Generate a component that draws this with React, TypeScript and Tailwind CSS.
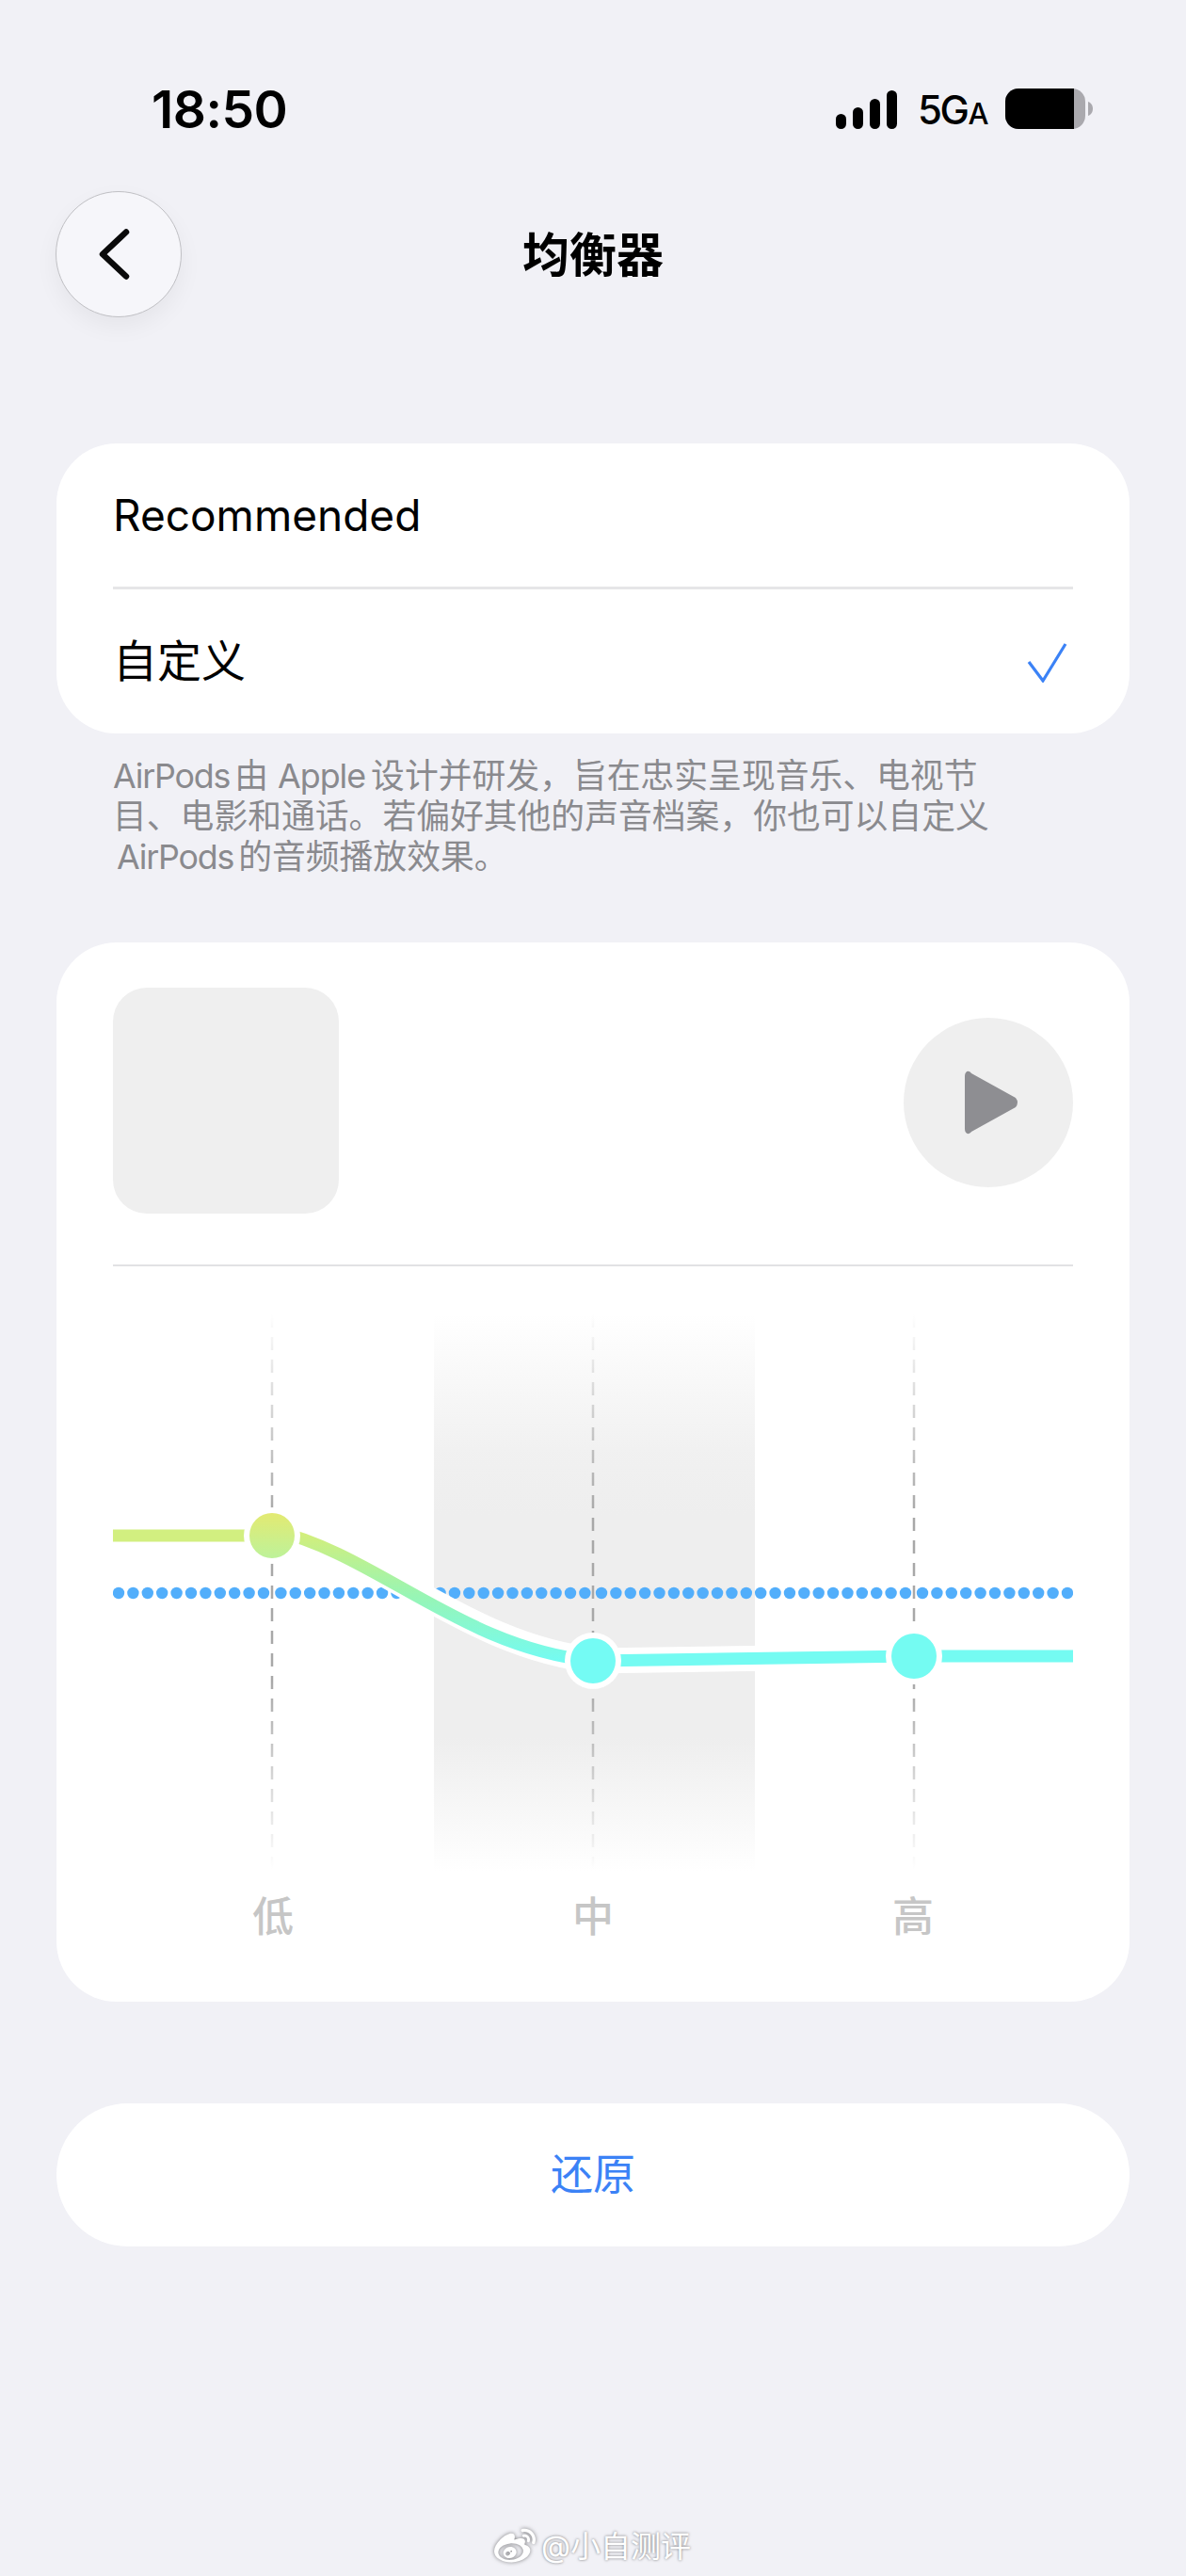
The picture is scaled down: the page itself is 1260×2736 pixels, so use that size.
import React from "react";
import { FaWeibo } from "react-icons/fa";

const SEGMENTS: [number, number, number][] = [
  [126, 15.4, 11],
  [298.4, 15.38, 22],
  [639, 15.38, 22],
  [980, 15.4, 11],
];

function Chart() {
  const xs = [289, 630, 971];
  const curve = "M289 1625 C400 1650 490 1750 630 1764";
  return (
    <svg viewBox="120 1345 1020 650" width="1020" height="650" className="block">
      <defs>
        <linearGradient id="band" x1="0" y1="0" x2="0" y2="1">
          <stop offset="0" stopColor="#eeeeee" stopOpacity="0" />
          <stop offset="0.25" stopColor="#eeeeee" stopOpacity="0.85" />
          <stop offset="0.36" stopColor="#eeeeee" />
          <stop offset="0.76" stopColor="#eeeeee" />
          <stop offset="1" stopColor="#eeeeee" stopOpacity="0" />
        </linearGradient>
        <linearGradient id="dash" gradientUnits="userSpaceOnUse" x1="0" y1="1396" x2="0" y2="1985">
          <stop offset="0" stopColor="#a8a8a8" stopOpacity="0" />
          <stop offset="0.36" stopColor="#a8a8a8" />
          <stop offset="0.66" stopColor="#a8a8a8" />
          <stop offset="1" stopColor="#a8a8a8" stopOpacity="0" />
        </linearGradient>
        <linearGradient id="curve" gradientUnits="userSpaceOnUse" x1="0" y1="1625" x2="0" y2="1764">
          <stop offset="0" stopColor="#d6ee78" />
          <stop offset="0.5" stopColor="#98f5b4" />
          <stop offset="1" stopColor="#74fbf2" />
        </linearGradient>
        <linearGradient id="node1" x1="0" y1="0" x2="0" y2="1">
          <stop offset="0" stopColor="#e3ea72" />
          <stop offset="1" stopColor="#bdf29a" />
        </linearGradient>
      </defs>
      <rect x="461" y="1396" width="341" height="592" fill="url(#band)" />
      {xs.map((x) => (
        <line key={x} x1={x} x2={x} y1="1396" y2="1985" stroke="url(#dash)" strokeWidth="2.5" strokeDasharray="14 10" />
      ))}
      {SEGMENTS.map(([start, step, n]) =>
        Array.from({ length: n }, (_, i) => (
          <circle key={`${start}-${i}`} cx={start + step * i} cy="1692" r="6.2" fill="#52aefb" />
        )),
      )}
      <path d={curve} fill="none" stroke="#ffffff" strokeWidth="27" transform="translate(7 0)" />
      <path d="M630 1764 L971 1759" fill="none" stroke="#ffffff" strokeWidth="27" />
      <path d={curve} fill="none" stroke="url(#curve)" strokeWidth="13" />
      <path d="M120 1631 L262 1631" fill="none" stroke="#d2ef80" strokeWidth="13" />
      <path d="M630 1764 L971 1759 L1140 1759" fill="none" stroke="#74fbf2" strokeWidth="13" />
      <circle cx="289" cy="1631" r="30" fill="#ffffff" />
      <circle cx="630" cy="1764" r="30" fill="#ffffff" />
      <circle cx="971" cy="1759" r="30" fill="#ffffff" />
      <circle cx="289" cy="1631" r="24" fill="url(#node1)" />
      <circle cx="630" cy="1764" r="24" fill="#74fbf4" />
      <circle cx="971" cy="1759" r="24" fill="#74fbf2" />
    </svg>
  );
}

export default function App() {
  return (
    <div className="relative w-[1260px] h-[2736px] overflow-hidden bg-[#f1f1f6] text-black font-['Inter','Noto_Sans_CJK_SC',sans-serif]">
      {/* status bar */}
      <div className="flex items-center justify-between h-[44px] mt-0 pt-[94px] box-content pl-[161px] pr-[98px]">
        <span className="text-[55px] leading-[44px] font-semibold tracking-[-0.5px]">18:50</span>
        <div className="flex items-center">
          <svg width="66" height="42" viewBox="0 0 66 42" className="block">
            <rect x="0" y="26" width="11" height="16" rx="5.5" fill="#000" />
            <rect x="18" y="19" width="11" height="23" rx="5.5" fill="#000" />
            <rect x="36" y="10" width="11" height="32" rx="5.5" fill="#000" />
            <rect x="54" y="1" width="11" height="41" rx="5.5" fill="#000" />
          </svg>
          <span className="ml-[21px] w-[73px] mt-[5px] text-[42px] leading-[44px] font-medium tracking-[-2.5px] whitespace-nowrap">
            5G<span className="ml-[1px] text-[31px]">A</span>
          </span>
          <svg width="94" height="44" viewBox="0 0 94 44" className="ml-[20px] block">
            <rect x="0" y="0" width="85" height="43" rx="14" fill="#aaa9ae" />
            <path d="M14 0H73V43H14A14 14 0 0 1 0 29V14A14 14 0 0 1 14 0Z" fill="#000" />
            <path d="M88 14C91 15 93 18 93 21.5C93 25 91 28 88 29Z" fill="#aaa9ae" />
          </svg>
        </div>
      </div>

      {/* nav */}
      <div className="grid grid-cols-[1fr_auto_1fr] items-center mt-[65px] px-[59px]">
        <button className="flex items-center justify-center w-[134px] h-[134px] rounded-full bg-[#f6f6fa] border border-[#c0c0c4] shadow-[0_10px_24px_rgba(0,0,0,0.05)]">
          <svg width="36" height="56" viewBox="0 0 36 56" fill="none" className="-ml-[9px]">
            <path d="M30 4.5 L5 28 L30 51.5" stroke="#0a0a0a" strokeWidth="6.5" strokeLinecap="round" strokeLinejoin="round" />
          </svg>
        </button>
        <h1 className="mt-[2px] text-[50px] leading-[60px] font-semibold">均衡器</h1>
        <div />
      </div>

      {/* preset card */}
      <div className="mt-[134px] mx-[60px] rounded-[64px] bg-white px-[60px]">
        <div className="flex items-center h-[155px] text-[46px] border-b-[3px] border-[#e6e6e8]">Recommended</div>
        <div className="flex items-center justify-between h-[153px] text-[47px]">
          <span>自定义</span>
          <svg width="44" height="44" viewBox="0 0 44 44" fill="none" className="mr-[5px]">
            <path d="M2 22 L17 42 L41 3" stroke="#3b82f6" strokeWidth="3.2" />
          </svg>
        </div>
      </div>

      <p className="mt-[24px] mx-[120px] text-[35.8px] leading-[43px] text-[#8a8a8e] whitespace-nowrap">
        <span className="block">
          <span className="tracking-[-1.2px]">AirPods</span>
          <span className="ml-[5px]">由</span> <span className="tracking-[-1px]">Apple</span>
          <span className="ml-[6px]">设计并研发，旨在忠实呈现音乐、电视节</span>
        </span>
        <span className="block">目、电影和通话。若偏好其他的声音档案，你也可以自定义</span>
        <span className="block ml-[4px]">
          <span className="tracking-[-1.2px]">AirPods</span>
          <span className="ml-[5px]">的音频播放效果。</span>
        </span>
      </p>

      {/* equalizer card */}
      <div className="mt-[69px] mx-[60px] h-[1125px] rounded-[64px] bg-white px-[60px] pt-[48px]">
        <div className="flex items-start justify-between h-[296px] border-b-2 border-[#e2e2e4]">
          <div className="w-[240px] h-[240px] rounded-[36px] bg-[#efefef]" />
          <div className="mt-[32px] flex items-center justify-center w-[180px] h-[180px] rounded-full bg-[#efefef]">
            <svg width="62" height="70" viewBox="0 0 62 70" className="ml-[6px]">
              <path d="M3 7 C3 2 7 0 10 4 L57 30 Q61 35 57 40 L10 66 C7 70 3 68 3 63 Z" fill="#8e8e92" />
            </svg>
          </div>
        </div>
        <Chart />
        <div className="grid grid-cols-3 mt-[19px] text-center text-[44px] leading-[44px] font-medium text-[#c6c6c6]">
          <span>低</span>
          <span>中</span>
          <span>高</span>
        </div>
      </div>

      {/* reset */}
      <button className="block mt-[108px] ml-[60px] w-[1140px] h-[152px] rounded-[76px] bg-white text-[45px] text-[#3b82f6]">
        还原
      </button>

      {/* watermark */}
      <div className="absolute left-[525px] top-[2682px] flex items-center gap-[6px] text-white text-[32px] leading-[46px] [text-shadow:0_0_3px_rgba(0,0,0,0.55)]">
        <FaWeibo className="w-[44px] h-[44px] text-white [filter:drop-shadow(0_0_2px_rgba(0,0,0,0.5))]" />
        <span>@小自测评</span>
      </div>
    </div>
  );
}
